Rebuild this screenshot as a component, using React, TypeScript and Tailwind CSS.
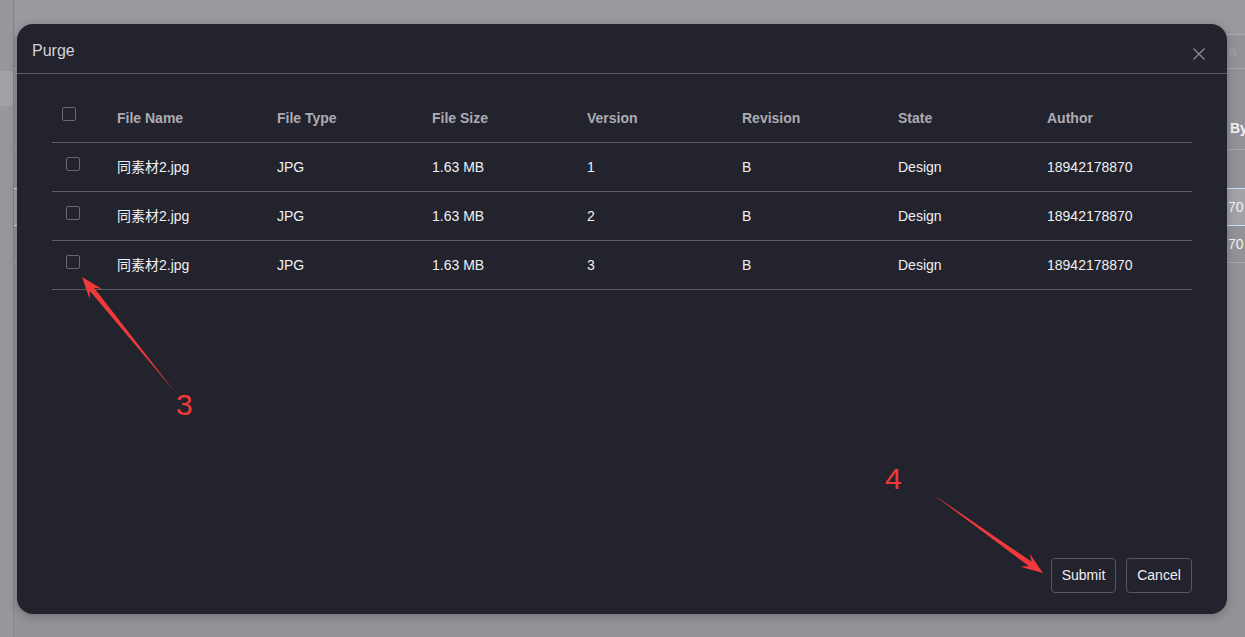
import { useState } from 'react';

type Row = {
  id: number;
  name: string;
  type: string;
  size: string;
  version: string;
  revision: string;
  state: string;
  author: string;
};

const rows: Row[] = [1, 2, 3].map((v) => ({
  id: v,
  name: '同素材2.jpg',
  type: 'JPG',
  size: '1.63 MB',
  version: String(v),
  revision: 'B',
  state: 'Design',
  author: '18942178870',
}));

const columns = ['File Name', 'File Type', 'File Size', 'Version', 'Revision', 'State', 'Author'];

// swept arrow shape, like a screenshot markup tool draws
function arrowPoints(tx: number, ty: number, px: number, py: number, h = 22, hw = 8, sw = 2.6) {
  const len = Math.hypot(px - tx, py - ty);
  const ux = (px - tx) / len;
  const uy = (py - ty) / len;
  const nx = -uy;
  const ny = ux;
  const bx = px - ux * h;
  const by = py - uy * h;
  const sx = px - ux * h * 0.72;
  const sy = py - uy * h * 0.72;
  const pts = [
    [tx, ty],
    [sx + nx * sw, sy + ny * sw],
    [bx + nx * hw, by + ny * hw],
    [px, py],
    [bx - nx * hw, by - ny * hw],
    [sx - nx * sw, sy - ny * sw],
  ];
  return pts.map((p) => `${p[0].toFixed(1)},${p[1].toFixed(1)}`).join(' ');
}

function Check({ checked, onChange }: { checked: boolean; onChange: () => void }) {
  return (
    <input
      type="checkbox"
      checked={checked}
      onChange={onChange}
      className="block appearance-none w-[14px] h-[14px] mb-[6px] border border-[#686871] rounded-[2px] bg-transparent checked:bg-[#4a7dff] checked:border-[#4a7dff]"
    />
  );
}

export default function App() {
  const [selected, setSelected] = useState<number[]>([]);
  const allOn = selected.length === rows.length;

  const toggle = (id: number) =>
    setSelected((s) => (s.includes(id) ? s.filter((x) => x !== id) : [...s, id]));

  return (
    <div className="relative h-screen w-full overflow-hidden bg-[#939297] font-['Liberation_Sans',Arial,'Noto_Sans_CJK_SC',sans-serif]">
      {/* dimmed page behind the dialog */}
      <div className="flex h-full">
        <div className="w-[13px] shrink-0 bg-[#98979c]">
          <div className="h-[71px]" />
          <div className="h-[35px] bg-[#a1a3a4]" />
        </div>
        <div className="flex-1 border-l border-[#85848a] flex flex-col">
          <div className="h-[35px] bg-[#9a999e] border-b border-[#a9a8ad]" />
          <div className="h-[34px] border-b border-[#a9a8ad] flex justify-end items-center">
            <span className="w-[16px] text-[13px] text-[#a9a8ad] overflow-hidden">n</span>
          </div>
          <div className="h-[81px] border-b border-[#a9a8ad] flex justify-end items-end pb-[10px]">
            <span className="w-[15px] text-[14px] font-bold text-[#f2f2f2] overflow-hidden whitespace-nowrap">By</span>
          </div>
          <div className="h-[38px]" />
          <div className="h-[38px] bg-[#a1a3a6] border-y border-[#cde2f6] flex justify-end items-center">
            <span className="w-[17px] text-[14px] text-[#f2f2f2] overflow-hidden whitespace-nowrap">70</span>
          </div>
          <div className="h-[37px] border-b border-[#a9a8ad] flex justify-end items-center">
            <span className="w-[17px] text-[14px] text-[#f2f2f2] overflow-hidden whitespace-nowrap">70</span>
          </div>
        </div>
      </div>

      {/* dialog */}
      <div className="absolute inset-0 flex items-start justify-start pl-[17px] pt-[24px]">
        <div className="w-[1210px] h-[590px] rounded-[16px] bg-[#23232d] shadow-[0_2px_10px_rgba(0,0,0,0.25)] flex flex-col">
          <div className="h-[50px] shrink-0 border-b border-[#5e5e66] flex items-center justify-between pl-[15px] pr-[22px]">
            <h2 className="text-[16px] text-[#d2d2d6] mt-[4px]">Purge</h2>
            <button className="text-[#8f8f97] mt-[10px]">
              <svg width="12" height="12" viewBox="0 0 12 12" fill="none" stroke="currentColor" strokeWidth="1.2">
                <path d="M0.5 0.5 L11.5 11.5 M11.5 0.5 L0.5 11.5" />
              </svg>
            </button>
          </div>

          <div className="flex-1 px-[35px] pt-[19px]">
            <table className="w-full table-fixed border-collapse">
              <colgroup>
                <col className="w-[65px]" />
                <col className="w-[160px]" />
                <col className="w-[155px]" />
                <col className="w-[155px]" />
                <col className="w-[155px]" />
                <col className="w-[156px]" />
                <col className="w-[149px]" />
                <col className="w-[145px]" />
              </colgroup>
              <thead>
                <tr className="h-[49px] border-b border-[#5e5e66]">
                  <th className="pl-[10px] align-middle">
                    <Check
                      checked={allOn}
                      onChange={() => setSelected(allOn ? [] : rows.map((r) => r.id))}
                    />
                  </th>
                  {columns.map((c) => (
                    <th key={c} className="pt-[2px] text-left text-[14px] font-bold text-[#acacb3] whitespace-nowrap">
                      {c}
                    </th>
                  ))}
                </tr>
              </thead>
              <tbody>
                {rows.map((r) => (
                  <tr key={r.id} className="h-[49px] border-b border-[#5e5e66] text-[14px] text-[#f0f0f2]">
                    <td className="pl-[14px] align-middle">
                      <Check checked={selected.includes(r.id)} onChange={() => toggle(r.id)} />
                    </td>
                    <td className="pt-[2px] whitespace-nowrap">{r.name}</td>
                    <td className="pt-[2px]">{r.type}</td>
                    <td className="pt-[2px]">{r.size}</td>
                    <td className="pt-[2px]">{r.version}</td>
                    <td className="pt-[2px]">{r.revision}</td>
                    <td className="pt-[2px]">{r.state}</td>
                    <td className="pt-[2px]">{r.author}</td>
                  </tr>
                ))}
              </tbody>
            </table>
          </div>

          <div className="flex justify-end gap-[10px] px-[35px] pb-[21px]">
            <button className="h-[35px] w-[65px] rounded-[4px] border border-[#57575f] text-[14px] text-[#f0f0f2]">
              Submit
            </button>
            <button className="h-[35px] w-[66px] rounded-[4px] border border-[#57575f] text-[14px] text-[#f0f0f2]">
              Cancel
            </button>
          </div>
        </div>
      </div>

      {/* markup annotations */}
      <svg className="absolute inset-0 pointer-events-none" width="1245" height="637">
        <polygon points={arrowPoints(175, 392, 82, 277, 22, 8, 2.6)} fill="#f03a3a" />
        <polygon points={arrowPoints(931, 493, 1043, 573, 22, 8, 2.6)} fill="#f03a3a" />
      </svg>
      <span className="absolute left-[176px] top-[390px] text-[30px] leading-none text-[#f03a3a] pointer-events-none">
        3
      </span>
      <span className="absolute left-[885px] top-[464px] text-[30px] leading-none text-[#f03a3a] pointer-events-none">
        4
      </span>
    </div>
  );
}
